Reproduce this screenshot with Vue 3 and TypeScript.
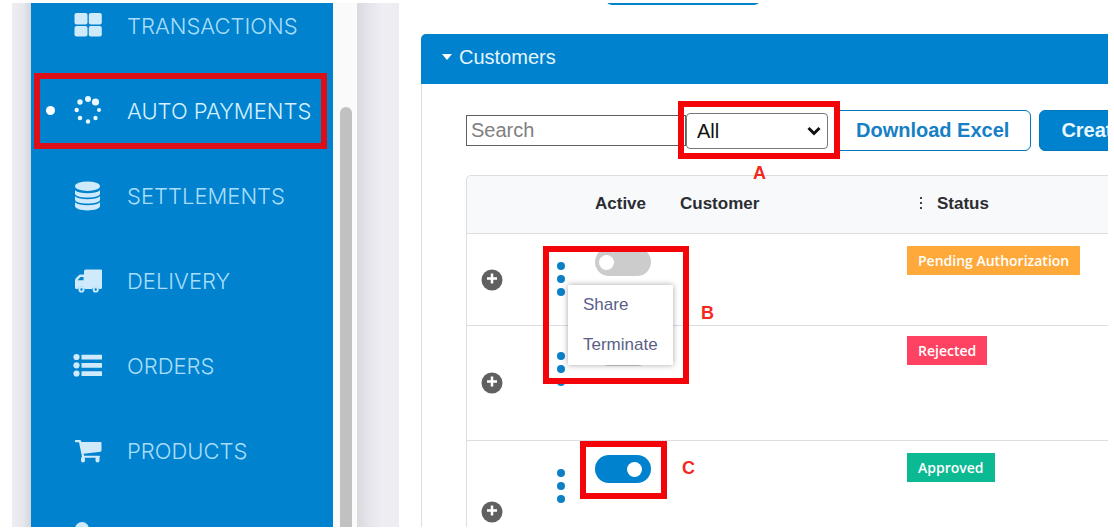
<script setup lang="ts">
import { ref } from 'vue'

interface NavItem {
  id: string
  label: string
  active?: boolean
}

interface CustomerRow {
  id: number
  active: boolean
  status: string
  tone: string
  size: string
  menuOpen?: boolean
  note?: string
}

const navItems: NavItem[] = [
  { id: 'grid', label: 'TRANSACTIONS' },
  { id: 'spinner', label: 'AUTO PAYMENTS', active: true },
  { id: 'database', label: 'SETTLEMENTS' },
  { id: 'truck', label: 'DELIVERY' },
  { id: 'list', label: 'ORDERS' },
  { id: 'cart', label: 'PRODUCTS' },
  { id: 'user', label: 'REFERRALS' },
]

const rows = ref<CustomerRow[]>([
  { id: 1, active: false, status: 'Pending Authorization', tone: 'pending', size: 'short', menuOpen: true },
  { id: 2, active: false, status: 'Rejected', tone: 'rejected', size: 'medium' },
  { id: 3, active: true, status: 'Approved', tone: 'approved', size: 'tall', note: 'C' },
])

const search = ref('')
const filter = ref('All')
</script>

<template>
  <div class="page">
    <div class="shell">
      <div class="gutter"></div>
      <nav class="sidebar" aria-label="Main">
        <ul>
          <li v-for="item in navItems" :key="item.id" :class="{ current: item.active }">
            <a href="#">
              <span class="bullet"></span>
              <svg class="nav-icon" viewBox="0 0 28 28" aria-hidden="true">
                <g v-if="item.id === 'grid'">
                  <rect x="0.500" y="1" width="13" height="11.500" rx="2" />
                  <rect x="14.800" y="1" width="13" height="11.500" rx="2" />
                  <rect x="0.500" y="14" width="13" height="10.500" rx="2" />
                  <rect x="14.800" y="14" width="13" height="10.500" rx="2" />
                </g>
                <g v-else-if="item.id === 'spinner'">
                  <circle cx="14" cy="2" r="3" />
                  <circle cx="21.500" cy="5" r="3.600" />
                  <circle cx="25" cy="13" r="2" />
                  <circle cx="21.500" cy="21" r="2.200" />
                  <circle cx="14" cy="24.500" r="2.200" />
                  <circle cx="6" cy="21" r="2.300" />
                  <circle cx="2.700" cy="13" r="2.200" />
                  <circle cx="6" cy="5" r="2.700" />
                </g>
                <g v-else-if="item.id === 'database'">
                  <ellipse cx="13.500" cy="4.200" rx="12.500" ry="4.800" />
                  <path d="M1 8.300c2.500 2.300 7 3 12.500 3s10-.7 12.500-3v3.200c0 2.600-5.600 4-12.500 4S1 14.100 1 11.500z" />
                  <path d="M1 14.300c2.500 2.300 7 3 12.500 3s10-.7 12.500-3v3.200c0 2.600-5.600 4-12.500 4S1 20.100 1 17.500z" />
                  <path d="M1 20.300c2.500 2.300 7 3 12.500 3s10-.7 12.500-3v3.700c0 2.700-5.600 4.400-12.500 4.400S1 26.700 1 24z" />
                </g>
                <g v-else-if="item.id === 'truck'">
                  <path fill-rule="evenodd" d="M11.500 2.500H27q1 0 1 1V20.500q0 1.500-1.500 1.500h-1.300a3.900 3.900 0 0 0-7.200 0h-7a3.900 3.900 0 0 0-7.200 0H2.500Q1 22 1 20.500V13.500q0-1.500 1-2.500L4.800 8.300Q5.500 7.500 7 7.500h3V4q0-1.500 1.500-1.500zM3.500 13.300h6V10H6.700z" />
                  <path fill-rule="evenodd" d="M7.500 19.300a3.100 3.100 0 1 0 0 6.200 3.100 3.100 0 0 0 0-6.200zm0 2a1.200 1.200 0 1 1 0 2.400 1.200 1.200 0 0 1 0-2.400zM21.700 19.300a3.100 3.100 0 1 0 0 6.200 3.100 3.100 0 0 0 0-6.200zm0 2a1.200 1.200 0 1 1 0 2.400 1.200 1.200 0 0 1 0-2.400z" />
                </g>
                <g v-else-if="item.id === 'list'">
                  <circle cx="2.500" cy="5" r="3.100" />
                  <circle cx="2.500" cy="13.300" r="3.100" />
                  <circle cx="2.500" cy="21.500" r="3.100" />
                  <rect x="7.500" y="2.700" width="20.500" height="4.800" rx="0.500" />
                  <rect x="7.500" y="11" width="20.500" height="4.800" rx="0.500" />
                  <rect x="7.500" y="19.200" width="20.500" height="4.800" rx="0.500" />
                </g>
                <g v-else-if="item.id === 'cart'">
                  <path d="M2 3h3.800q1 0 1.300 1l.3 1H26.500q1 0 1 1V13.500q0 1-1 1.200L9.700 16.800l.4 1.900H25q1 0 1 1t-1 1H8.200L5 5.300H2q-1.200 0-1.200-1.200T2 3z" />
                  <rect x="7" y="19.500" width="4" height="6" rx="2" />
                  <rect x="21.500" y="19.500" width="4" height="6" rx="2" />
                </g>
                <g v-else>
                  <circle cx="8" cy="7" r="7" />
                  <path d="M0 28c0-8 3-12 8-12s8 4 8 12z" />
                </g>
              </svg>
              <span class="nav-label">{{ item.label }}</span>
            </a>
            <span v-if="item.active" class="mark mark-nav"></span>
          </li>
        </ul>
      </nav>
      <div class="track"><div class="thumb"></div></div>
      <div class="shade"></div>

      <main class="content">
        <div class="top-action"></div>
        <section class="panel">
          <button class="panel-head" type="button" aria-expanded="true">
            <span class="caret"></span>Customers
          </button>
          <div class="panel-body">
            <div class="toolbar">
              <input v-model="search" class="search" type="text" placeholder="Search" aria-label="Search" />
              <div class="filter">
                <select v-model="filter" aria-label="Filter customers">
                  <option>All</option>
                  <option>Active</option>
                </select>
                <svg class="chevron" viewBox="0 0 14 10" aria-hidden="true"><path d="M1.500 2 7 7.500 12.500 2" /></svg>
                <span class="mark mark-a"></span>
                <span class="letter letter-a">A</span>
              </div>
              <button class="btn outline" type="button">Download Excel</button>
              <button class="btn solid" type="button">Create</button>
            </div>

            <table class="grid">
              <colgroup>
                <col class="c-expand" />
                <col class="c-menu" />
                <col class="c-active" />
                <col class="c-customer" />
                <col />
              </colgroup>
              <thead>
                <tr>
                  <th></th>
                  <th></th>
                  <th>Active</th>
                  <th>Customer</th>
                  <th class="status-head">
                    <svg class="grip" viewBox="0 0 4 14" aria-hidden="true">
                      <rect x="1" y="1" width="2" height="2" />
                      <rect x="1" y="6" width="2" height="2" />
                      <rect x="1" y="11" width="2" height="2" />
                    </svg>Status
                  </th>
                </tr>
              </thead>
              <tbody>
                <tr v-for="row in rows" :key="row.id" :class="row.size">
                  <td class="expand-cell">
                    <button class="expand" type="button" aria-label="Expand row">
                      <svg viewBox="0 0 22 22" aria-hidden="true">
                        <circle cx="11" cy="11" r="10.500" />
                        <path d="M11 4.500v10M6 9.500h10" />
                      </svg>
                    </button>
                  </td>
                  <td class="menu-cell">
                    <div class="menu-anchor">
                      <button class="dots" type="button" aria-label="Row actions">
                        <i></i><i></i><i></i>
                      </button>
                      <template v-if="row.menuOpen">
                        <div class="menu">
                          <button type="button">Share</button>
                          <button type="button">Terminate</button>
                        </div>
                        <span class="mark mark-b"></span>
                        <span class="letter letter-b">B</span>
                      </template>
                    </div>
                  </td>
                  <td>
                    <div class="switch-wrap">
                      <input v-model="row.active" class="switch" type="checkbox" aria-label="Active" />
                      <template v-if="row.note">
                        <span class="mark mark-c"></span>
                        <span class="letter letter-c">{{ row.note }}</span>
                      </template>
                    </div>
                  </td>
                  <td></td>
                  <td><span class="badge" :class="row.tone">{{ row.status }}</span></td>
                </tr>
              </tbody>
            </table>
          </div>
        </section>
      </main>
    </div>
  </div>
</template>

<style>
body {
  margin: 0;
  background: #fff;
}
</style>

<style scoped>
* {
  box-sizing: border-box;
}

.page {
  height: 100vh;
  padding: 3px 6px 2px 12px;
  overflow: hidden;
  font-family: "Liberation Sans", Arial, sans-serif;
}

button {
  font-family: inherit;
  cursor: pointer;
}

.shell {
  display: flex;
  height: 100%;
  overflow: hidden;
}

.gutter {
  flex: 0 0 19px;
  background: linear-gradient(to right, #eeeef3, #e6e7ec 60%, #d2d5db);
}

.sidebar {
  flex: 0 0 302px;
  background: #0082ce;
}

.sidebar ul {
  margin: -20px 0 0;
  padding: 0;
  list-style: none;
}

.sidebar li {
  position: relative;
}

.sidebar a {
  display: flex;
  align-items: center;
  height: 85px;
  padding-left: 15px;
  color: #a8defb;
  text-decoration: none;
}

.bullet {
  width: 9px;
  height: 9px;
  margin-right: 19px;
  border-radius: 50%;
}

.current .bullet {
  background: #fff;
}

.nav-icon {
  width: 28px;
  height: 28px;
  margin-right: 25px;
  fill: #cfeafb;
  overflow: visible;
}

.current .nav-icon {
  fill: #e9f8ff;
}

.nav-label {
  font-family: Inter, "Liberation Sans", sans-serif;
  font-size: 22px;
  font-weight: 300;
  white-space: nowrap;
}

.current a {
  color: #d5f1ff;
}

.track {
  flex: 0 0 24px;
  padding: 104px 5px 0 7px;
  background: #fafafa;
}

.thumb {
  height: 100%;
  border-radius: 6px 6px 0 0;
  background: #c1c1c1;
}

.shade {
  flex: 0 0 42px;
  background: linear-gradient(to right, #d9d9de, #e5e6eb 30%, #eeeef4 60%, #ececf1);
}

.content {
  flex: 1;
  min-width: 0;
  padding-left: 22px;
  overflow: hidden;
}

.top-action {
  width: 154px;
  height: 40px;
  margin: -38px 0 29px 185px;
  border-radius: 6px;
  background: #0082ce;
}

.panel-head {
  display: flex;
  align-items: center;
  width: 100%;
  height: 50px;
  padding: 0 21px 4px;
  border: 0;
  border-radius: 5px 0 0 0;
  background: #0082ce;
  color: #e4f5ff;
  font-size: 20px;
}

.caret {
  margin-right: 7px;
  border: 5px solid transparent;
  border-top: 6px solid #fff;
  border-bottom: 0;
}

.panel-body {
  padding: 26px 0 0 44px;
  border-left: 1px solid #dcdee2;
}

.toolbar {
  display: flex;
  align-items: center;
  height: 41px;
}

.search {
  flex: 0 0 220px;
  width: 220px;
  height: 31px;
  padding: 0 4px;
  border: 1px solid #5f5f5f;
  border-radius: 0;
  background: #fff;
  color: #222;
  font: 20px "Liberation Sans", Arial, sans-serif;
}

.search::placeholder {
  color: #808080;
}

.filter {
  position: relative;
  flex: 0 0 142px;
  margin-right: 6px;
}

.filter select {
  display: block;
  width: 100%;
  height: 36px;
  padding: 0 10px;
  appearance: none;
  border: 1px solid #777;
  border-radius: 4px;
  background: #fff;
  color: #111;
  font: 20px "Liberation Sans", Arial, sans-serif;
}

.chevron {
  position: absolute;
  top: 13px;
  right: 7px;
  width: 14px;
  height: 10px;
  fill: none;
  stroke: #111;
  stroke-width: 3;
  pointer-events: none;
}

.btn {
  flex: none;
  height: 41px;
  padding: 0 21px;
  border: 1px solid #0077bd;
  border-radius: 6px;
  font-size: 20px;
  font-weight: 700;
  white-space: nowrap;
}

.outline {
  margin-right: 8px;
  background: #fff;
  color: #1580c6;
}

.solid {
  background: #0082ce;
  color: #eaf7ff;
}

.grid {
  width: 100%;
  margin-top: 24px;
  border: 1px solid #dcdee2;
  border-right: 0;
  border-radius: 5px 0 0 0;
  border-spacing: 0;
  table-layout: fixed;
  overflow: visible;
}

.c-expand {
  width: 75px;
}

.c-menu {
  width: 38px;
}

.c-active {
  width: 85px;
}

.c-customer {
  width: 227px;
}

th {
  height: 58px;
  padding: 0 0 1px 15px;
  border-bottom: 1px solid #dcdee2;
  background: #f8f9fb;
  color: #2b2d31;
  font-size: 17px;
  font-weight: 700;
  text-align: left;
}

th:first-child {
  border-radius: 5px 0 0 0;
}

.status-head {
  padding-left: 27px;
}

.grip {
  width: 4px;
  height: 14px;
  margin-right: 14px;
  fill: #444;
  vertical-align: -1px;
}

td {
  padding: 12px 0 0 15px;
  border-bottom: 1px solid #dcdee2;
  vertical-align: top;
}

.short td {
  height: 92px;
}

.medium td {
  height: 115px;
  padding-top: 10px;
}

.tall td {
  height: 143px;
}

td.expand-cell,
.medium td.expand-cell {
  padding: 0 0 0 14px;
  vertical-align: middle;
}

.expand {
  display: block;
  width: 22px;
  height: 22px;
  padding: 0;
  border: 0;
  background: none;
}

.expand svg {
  display: block;
  fill: #606060;
}

.expand path {
  stroke: #fff;
  stroke-width: 2.500;
}

.menu-anchor {
  position: relative;
  padding-top: 16px;
}

.dots {
  display: grid;
  gap: 5px;
  width: 8px;
  padding: 0;
  border: 0;
  background: none;
}

.dots i {
  width: 8px;
  height: 8px;
  border-radius: 50%;
  background: #0b80c5;
}

.menu {
  position: absolute;
  z-index: 2;
  top: 39px;
  left: 11px;
  width: 105px;
  background: #fff;
  box-shadow: 0 0 6px rgba(0, 0, 0, 0.35);
}

.menu button {
  display: block;
  width: 100%;
  height: 40px;
  padding: 0 0 0 15px;
  border: 0;
  background: none;
  color: #5b6087;
  font-size: 17px;
  text-align: left;
}

.switch-wrap {
  position: relative;
  width: 56px;
  padding-top: 2px;
}

.switch {
  display: flex;
  align-items: center;
  width: 56px;
  height: 28px;
  margin: 0;
  padding: 0 4px;
  appearance: none;
  border-radius: 14px;
  background: #ccc;
}

.switch::before {
  width: 15px;
  height: 15px;
  border-radius: 50%;
  background: #fff;
  content: "";
}

.switch:checked {
  justify-content: flex-end;
  padding-right: 9px;
  background: #0082ce;
}

.badge {
  display: inline-block;
  height: 29px;
  padding: 0 11px;
  color: #fff;
  font: 600 14px/29px "Open Sans", sans-serif;
  white-space: nowrap;
}

.pending {
  background: #ffa93a;
}

.rejected {
  background: #ff4261;
}

.approved {
  background: #0bb992;
}

/* Callout frames and letters laid over the interface */
.mark {
  position: absolute;
  z-index: 3;
  border: 6px solid #f20408;
  pointer-events: none;
}

.mark-nav {
  inset: 5px 6px 4px 3px;
  border-color: #dc0f19;
}

.mark-a {
  inset: -12px -12px -10px -8px;
}

.mark-b {
  top: 0;
  left: -14px;
  width: 146px;
  height: 138px;
}

.mark-c {
  inset: -12px -16px -16px -15px;
}

.letter {
  position: absolute;
  z-index: 3;
  color: #f5281e;
  font-size: 18px;
  font-weight: 700;
  line-height: 20px;
}

.letter-a {
  top: 50px;
  left: 67px;
}

.letter-b {
  top: 57px;
  left: 144px;
}

.letter-c {
  top: 5px;
  left: 87px;
}
</style>
